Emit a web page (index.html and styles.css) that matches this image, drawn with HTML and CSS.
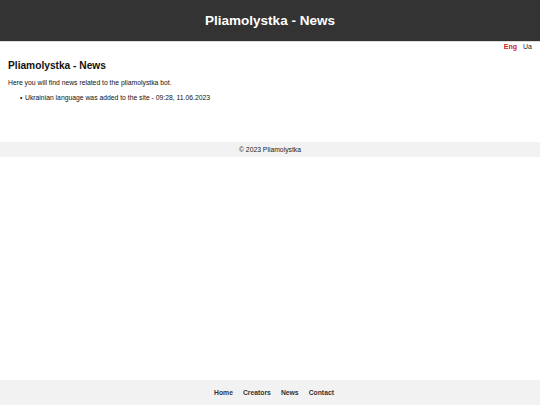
FILE: index.html
```html
<!DOCTYPE html>
<html lang="en">
<head>
<meta charset="utf-8">
<title>Pliamolystka - News</title>
<link rel="stylesheet" href="styles.css">
</head>
<body>
<header class="site-header">
  <div class="site-title">Pliamolystka - News</div>
</header>
<div class="lang">
  <a class="lang-link active" href="#">Eng</a>
  <a class="lang-link" href="#">Ua</a>
</div>
<main class="content">
  <h1 class="page-title">Pliamolystka - News</h1>
  <p class="intro">Here you will find news related to the pliamolystka bot.</p>
  <ul class="news">
    <li>Ukrainian language was added to the site - 09:28, 11.06.2023</li>
  </ul>
</main>
<footer class="copyright">© 2023 Pliamolystka</footer>
<nav class="bottom-nav">
  <a href="#">Home</a>
  <a href="#">Creators</a>
  <a href="#">News</a>
  <a href="#">Contact</a>
</nav>
</body>
</html>
```
FILE: styles.css
```css
html, body {
  margin: 0;
  padding: 0;
}
body {
  font-family: "Liberation Sans", Arial, sans-serif;
  color: #111;
  background: #fff;
  font-size: 6.8px;
}
.site-header {
  background: #333333;
  height: 41px;
  border-bottom: 1px solid #dcdcdc;
  display: flex;
  align-items: center;
  justify-content: center;
}
.site-title {
  color: #fff;
  font-weight: bold;
  font-size: 13.5px;
}
.lang {
  display: flex;
  justify-content: flex-end;
  gap: 6px;
  padding: 0 8px;
  height: 9px;
  align-items: center;
}
.lang-link {
  font-size: 7px;
  color: #222;
  text-decoration: none;
}
.lang-link.active {
  color: #d0202a;
  font-weight: bold;
}
.content {
  padding: 0 8px;
  height: 83px;
}
.page-title {
  font-size: 10.2px;
  margin: 8px 0 0;
  line-height: 13px;
}
.intro {
  margin: 7px 0 0;
  line-height: 8px;
}
.news {
  margin: 7px 0 0;
  padding-left: 12px;
  line-height: 8px;
  list-style: none;
}
.news li::before {
  content: "\2022";
  display: inline-block;
  width: 5px;
}
.copyright {
  background: #f2f2f2;
  height: 15px;
  display: flex;
  align-items: center;
  justify-content: center;
  color: #222;
}
.bottom-nav {
  position: fixed;
  left: 0;
  right: 0;
  bottom: 0;
  height: 25px;
  padding-left: 8px;
  background: #f2f2f2;
  display: flex;
  justify-content: center;
  align-items: center;
  gap: 10px;
}
.bottom-nav a {
  color: #333;
  font-weight: bold;
  text-decoration: none;
}
```
